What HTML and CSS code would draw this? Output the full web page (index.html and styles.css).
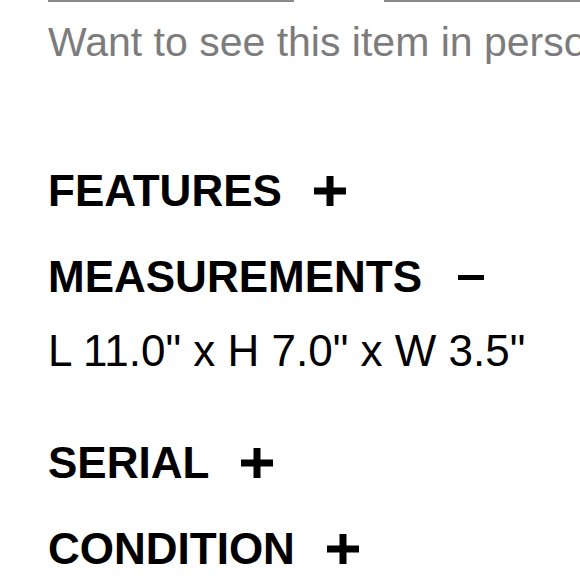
FILE: index.html
```html
<!DOCTYPE html>
<html lang="en">
<head>
<meta charset="utf-8">
<title>Item details</title>
<link rel="stylesheet" href="styles.css">
</head>
<body>
<div class="page">
  <div class="dividers">
    <span class="rule rule-left"></span>
    <span class="rule rule-right"></span>
  </div>
  <p class="intro">Want to see this item in person? Visit one of our stores.</p>
  <div class="details">
    <h3 class="acc-head">FEATURES
      <svg class="icon plus" viewBox="0 0 32 30" aria-hidden="true"><rect x="12.5" y="0" width="7" height="30"/><rect x="0" y="11.5" width="32" height="7"/></svg>
    </h3>
    <h3 class="acc-head acc-open">MEASUREMENTS
      <svg class="icon minus" viewBox="0 0 26 5" aria-hidden="true"><rect x="0" y="0" width="26" height="5"/></svg>
    </h3>
    <p class="acc-body">L 11.0" x H 7.0" x W 3.5"</p>
    <h3 class="acc-head">SERIAL
      <svg class="icon plus" viewBox="0 0 32 30" aria-hidden="true"><rect x="12.5" y="0" width="7" height="30"/><rect x="0" y="11.5" width="32" height="7"/></svg>
    </h3>
    <h3 class="acc-head acc-last">CONDITION
      <svg class="icon plus" viewBox="0 0 32 30" aria-hidden="true"><rect x="12.5" y="0" width="7" height="30"/><rect x="0" y="11.5" width="32" height="7"/></svg>
    </h3>
  </div>
</div>
</body>
</html>
```

FILE: styles.css
```css
html, body {
  margin: 0;
  padding: 0;
  background: #ffffff;
}

body {
  font-family: "Liberation Sans", Arial, sans-serif;
  color: #000000;
  overflow: hidden;
}

.page {
  padding-left: 48px;
  width: 580px;
  box-sizing: border-box;
  overflow: hidden;
}

.dividers {
  display: flex;
  gap: 90px;
  height: 2px;
}

.rule {
  display: block;
  height: 2px;
  background: #8a8a8a;
}

.rule-left {
  flex: 0 0 246px;
}

.rule-right {
  flex: 1 1 auto;
}

.intro {
  margin: 14px 0 0;
  font-size: 41px;
  line-height: 52px;
  color: #7c7c7c;
  white-space: nowrap;
  overflow: hidden;
}

.details {
  margin-top: 101px;
}

.acc-head {
  display: flex;
  align-items: center;
  gap: 32px;
  margin: 0 0 42px;
  font-size: 44px;
  line-height: 44px;
  font-weight: 700;
  white-space: nowrap;
}

.acc-open {
  margin-bottom: 30px;
}

.acc-last {
  margin-bottom: 0;
}

.acc-body {
  margin: 0 0 68px;
  font-size: 44px;
  line-height: 44px;
  font-weight: 400;
  white-space: nowrap;
}

.icon {
  display: block;
  fill: #000000;
  flex: none;
}

.plus {
  width: 32px;
  height: 30px;
}

.minus {
  width: 26px;
  height: 5px;
  margin-left: 4px;
}
```
